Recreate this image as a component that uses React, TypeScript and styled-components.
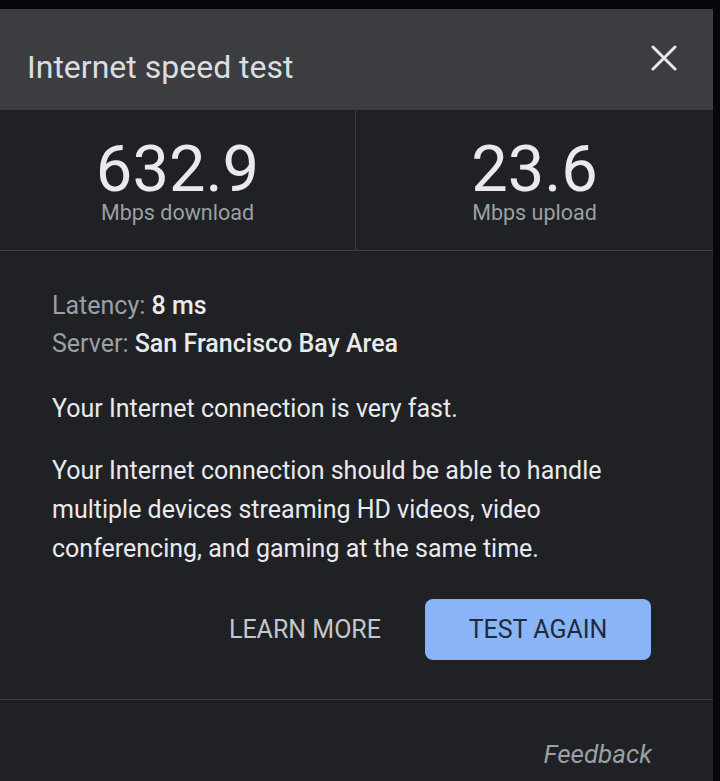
import React from 'react';
import styled, { createGlobalStyle } from 'styled-components';

const Global = createGlobalStyle`
  body {
    margin: 0;
    background: #05070b;
    font-family: Roboto, "Liberation Sans", Arial, sans-serif;
  }
`;

const Page = styled.div`
  width: 720px;
  height: 781px;
  overflow: hidden;
  padding: 9px 7px 0 0;
  box-sizing: border-box;
`;

const Panel = styled.div`
  background: #202124;
  height: 100%;
  display: flex;
  flex-direction: column;
`;

const Header = styled.div`
  height: 101px;
  background: #3c3d41;
  display: flex;
  align-items: center;
  justify-content: space-between;
  padding: 0 36px 0 27px;
  box-sizing: border-box;
`;

const Title = styled.h1`
  margin: 0;
  font-size: 32px;
  font-weight: 400;
  color: #dcdde0;
  padding-top: 14px;
`;

const CloseButton = styled.button`
  background: none;
  border: 0;
  padding: 0;
  display: flex;
  color: #e8e9ec;
  margin-top: -4px;
`;

const Stats = styled.div`
  display: grid;
  grid-template-columns: 356px 1fr;
  height: 141px;
  border-bottom: 1px solid #3c3e42;
  box-sizing: border-box;
`;

const Stat = styled.div<{ divider?: boolean }>`
  display: flex;
  flex-direction: column;
  align-items: center;
  padding-top: 27px;
  border-right: ${p => (p.divider ? '1px solid #3c3e42' : 'none')};
`;

const Value = styled.div`
  font-size: 65px;
  line-height: 64px;
  color: #e8eaed;
`;

const Unit = styled.div`
  font-size: 21.5px;
  line-height: 24px;
  color: #9aa0a6;
`;

const Body = styled.div`
  padding: 36px 62px 0 52px;
  border-bottom: 1px solid #3c3e42;
  height: 449px;
  box-sizing: border-box;
`;

const InfoLine = styled.div`
  font-size: 25px;
  line-height: 38px;
  color: #9aa0a6;
`;

const InfoValue = styled.span`
  color: #e8eaed;
  font-weight: 500;
`;

const Paragraph = styled.p<{ gap?: number }>`
  margin: ${p => p.gap ?? 0}px 0 0;
  font-size: 25px;
  line-height: 39px;
  color: #e8eaed;
`;

const Actions = styled.div`
  display: flex;
  justify-content: flex-end;
  align-items: center;
  gap: 44px;
  margin-top: 31px;
`;

const TextButton = styled.button`
  background: none;
  border: 0;
  padding: 0;
  font-family: inherit;
  font-size: 25px;
  color: #c4c7cc;
`;

const PrimaryButton = styled.button`
  width: 226px;
  height: 61px;
  border: 0;
  border-radius: 8px;
  background: #8ab4f8;
  color: #1f2a3d;
  font-family: inherit;
  font-size: 25px;
`;

const Footer = styled.div`
  display: flex;
  justify-content: flex-end;
  padding: 39px 61px 0 0;
`;

const Feedback = styled.a`
  font-size: 26px;
  font-style: italic;
  color: #9aa0a6;
`;

export default function App() {
  return (
    <Page>
      <Global />
      <Panel>
        <Header>
          <Title>Internet speed test</Title>
          <CloseButton aria-label="Close">
            <svg width="26" height="26" viewBox="0 0 26 26">
              <path d="M2 2L24 24M24 2L2 24" stroke="currentColor" strokeWidth="3" strokeLinecap="round" />
            </svg>
          </CloseButton>
        </Header>
        <Stats>
          <Stat divider>
            <Value>632.9</Value>
            <Unit>Mbps download</Unit>
          </Stat>
          <Stat>
            <Value>23.6</Value>
            <Unit>Mbps upload</Unit>
          </Stat>
        </Stats>
        <Body>
          <InfoLine>
            Latency: <InfoValue>8 ms</InfoValue>
          </InfoLine>
          <InfoLine>
            Server: <InfoValue>San Francisco Bay Area</InfoValue>
          </InfoLine>
          <Paragraph gap={26}>Your Internet connection is very fast.</Paragraph>
          <Paragraph gap={23}>
            Your Internet connection should be able to handle multiple devices streaming HD videos, video
            conferencing, and gaming at the same time.
          </Paragraph>
          <Actions>
            <TextButton>LEARN MORE</TextButton>
            <PrimaryButton>TEST AGAIN</PrimaryButton>
          </Actions>
        </Body>
        <Footer>
          <Feedback>Feedback</Feedback>
        </Footer>
      </Panel>
    </Page>
  );
}
